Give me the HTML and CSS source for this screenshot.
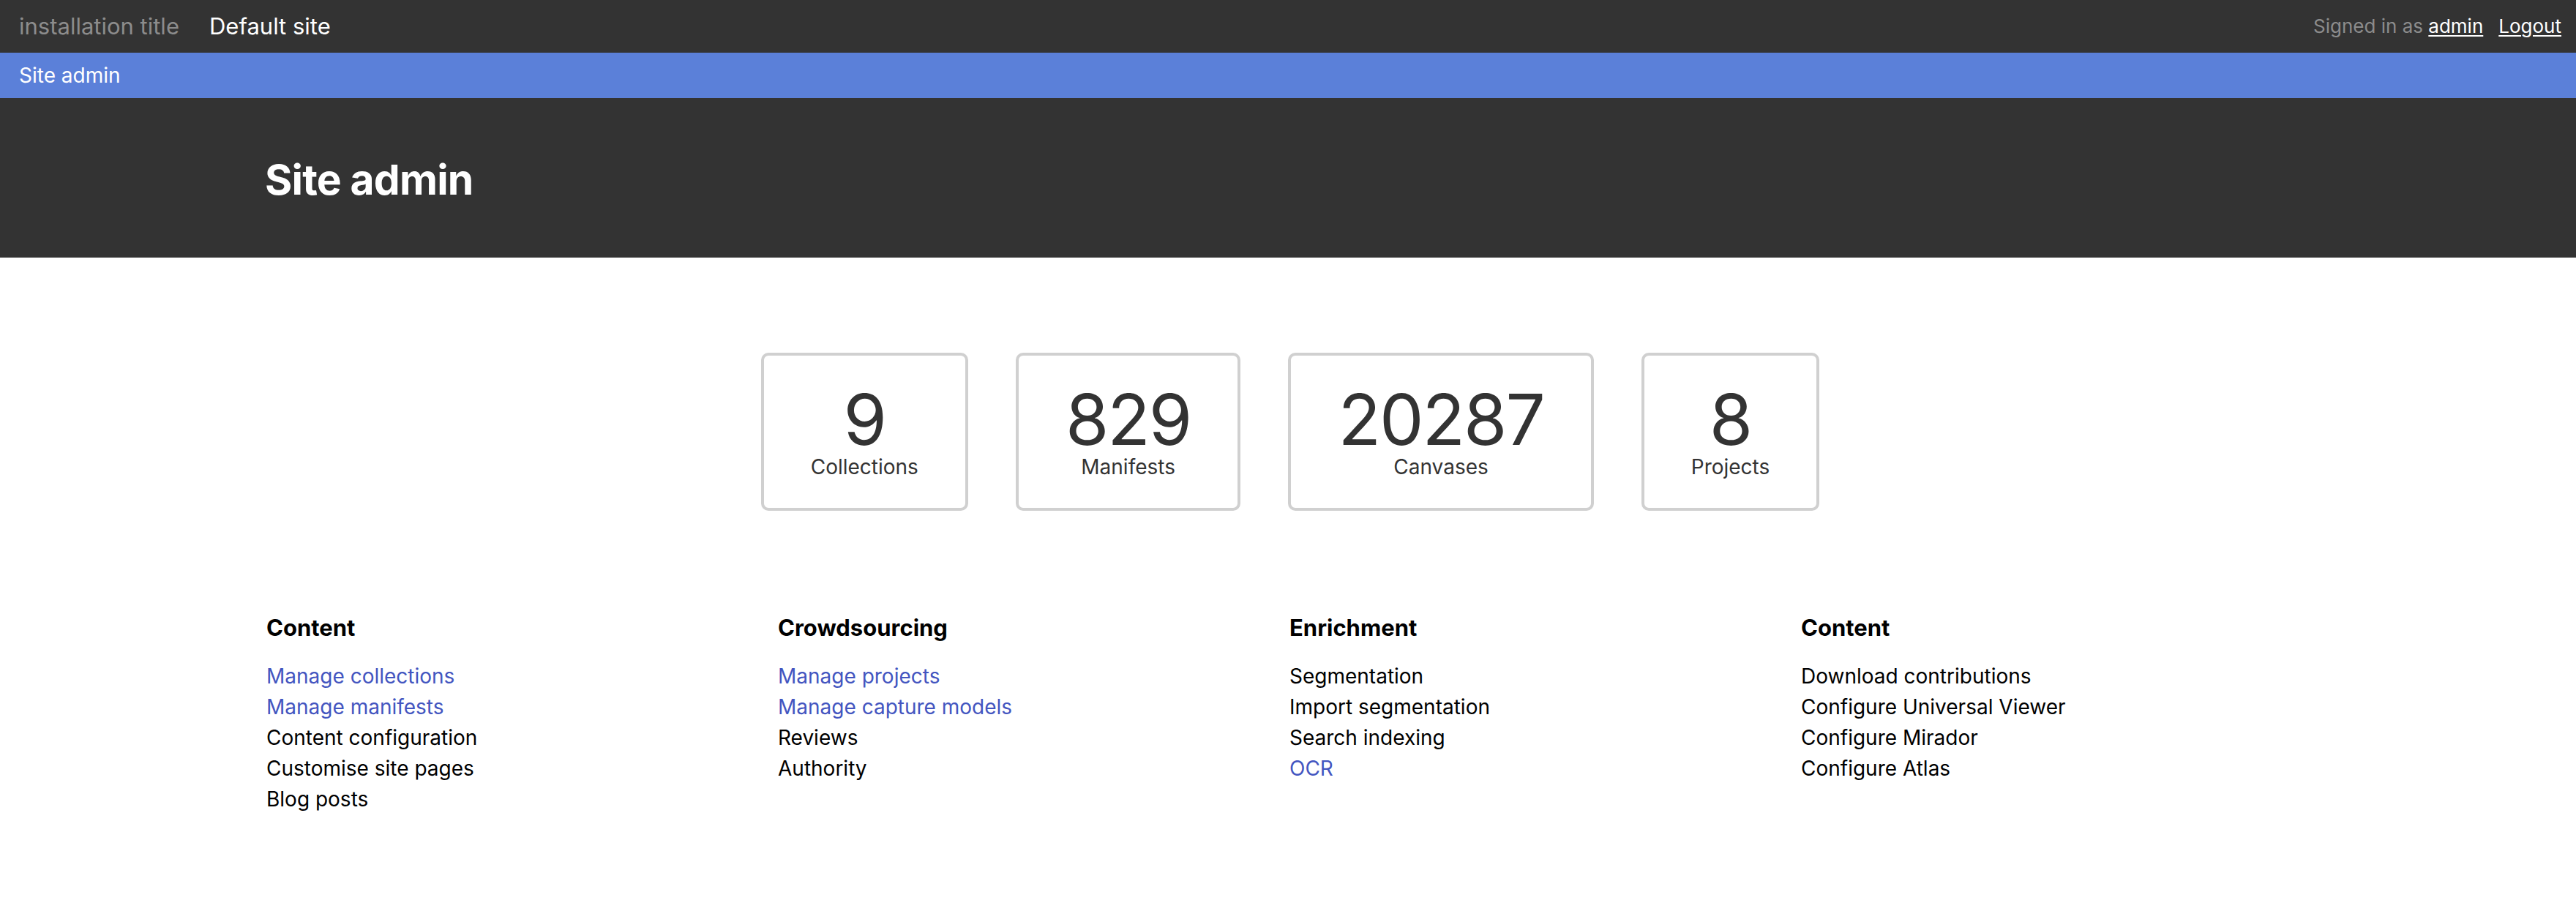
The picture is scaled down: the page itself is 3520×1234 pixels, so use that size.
FILE: index.html
```html
<!DOCTYPE html>
<html lang="en">
<head>
<meta charset="utf-8">
<title>Site admin</title>
<link rel="stylesheet" href="styles.css">
</head>
<body>
<header class="topbar">
  <div class="topbar-left">
    <span class="install-title">installation title</span>
    <a class="site-name" href="#">Default site</a>
  </div>
  <div class="topbar-right">
    <span class="signed">Signed in as <a class="user-link" href="#">admin</a></span>
    <a class="user-link logout" href="#">Logout</a>
  </div>
</header>
<nav class="subnav">
  <a class="subnav-link" href="#">Site admin</a>
</nav>
<section class="hero">
  <div class="container">
    <h1 class="hero-title">Site admin</h1>
  </div>
</section>
<section class="stats">
  <div class="stat">
    <div class="stat-num">9</div>
    <div class="stat-label">Collections</div>
  </div>
  <div class="stat">
    <div class="stat-num">829</div>
    <div class="stat-label">Manifests</div>
  </div>
  <div class="stat">
    <div class="stat-num">20287</div>
    <div class="stat-label">Canvases</div>
  </div>
  <div class="stat">
    <div class="stat-num">8</div>
    <div class="stat-label">Projects</div>
  </div>
</section>
<section class="container menus">
  <div class="menu">
    <h3 class="menu-title">Content</h3>
    <ul class="menu-list">
      <li><a class="menu-link" href="#">Manage collections</a></li>
      <li><a class="menu-link" href="#">Manage manifests</a></li>
      <li>Content configuration</li>
      <li>Customise site pages</li>
      <li>Blog posts</li>
    </ul>
  </div>
  <div class="menu">
    <h3 class="menu-title">Crowdsourcing</h3>
    <ul class="menu-list">
      <li><a class="menu-link" href="#">Manage projects</a></li>
      <li><a class="menu-link" href="#">Manage capture models</a></li>
      <li>Reviews</li>
      <li>Authority</li>
    </ul>
  </div>
  <div class="menu">
    <h3 class="menu-title">Enrichment</h3>
    <ul class="menu-list">
      <li>Segmentation</li>
      <li>Import segmentation</li>
      <li>Search indexing</li>
      <li><a class="menu-link" href="#">OCR</a></li>
    </ul>
  </div>
  <div class="menu">
    <h3 class="menu-title">Content</h3>
    <ul class="menu-list">
      <li>Download contributions</li>
      <li>Configure Universal Viewer</li>
      <li>Configure Mirador</li>
      <li>Configure Atlas</li>
    </ul>
  </div>
</section>
</body>
</html>
```

FILE: styles.css
```css
* { box-sizing: border-box; }

body {
  margin: 0;
  font-family: Inter, "Noto Sans", "Liberation Sans", sans-serif;
  font-size: 28px;
  line-height: 42px;
  color: #000;
  background: #fff;
}

a { text-decoration: none; }

.topbar {
  height: 72px;
  background: #333;
  display: flex;
  align-items: center;
  justify-content: space-between;
  padding: 0 20px 0 26px;
}

.topbar-left {
  display: flex;
  align-items: center;
  gap: 41px;
  font-size: 31px;
}

.install-title { color: #8c8c8c; }

.site-name { color: #fff; }

.topbar-right {
  display: flex;
  align-items: center;
  gap: 21px;
  font-size: 26px;
}

.signed { color: #8c8c8c; }

.user-link {
  color: #fff;
  text-decoration: underline;
  text-decoration-thickness: 2px;
  text-underline-offset: 3px;
}

.subnav {
  height: 62px;
  background: #5b80d9;
  display: flex;
  align-items: center;
  padding: 0 26px;
}

.subnav-link { color: #fff; }

.container {
  width: 2800px;
  margin: 0 auto;
}

.hero {
  height: 218px;
  background: #333;
  padding-top: 77px;
}

.hero-title {
  margin: 0;
  color: #fff;
  font-size: 57px;
  line-height: 70px;
  font-weight: 700;
  letter-spacing: -0.8px;
  padding-left: 2px;
}

.stats {
  display: flex;
  justify-content: center;
  gap: 65px;
  margin-top: 130px;
  padding-left: 6px;
}

.stat {
  border: 4px solid #d0d0d0;
  border-radius: 10px;
  padding: 39px 64px;
  text-align: center;
  color: #333;
}

.stat-num {
  font-size: 96px;
  line-height: 96px;
  letter-spacing: -2px;
}

.stat-label {
  font-size: 28px;
  line-height: 34px;
}

.menus {
  display: grid;
  grid-template-columns: repeat(4, 1fr);
  margin-top: 142px;
  padding-left: 4px;
}

.menu-title {
  margin: 0 0 27px;
  font-size: 31px;
  line-height: 36px;
  font-weight: 700;
}

.menu-list {
  list-style: none;
  margin: 0;
  padding: 0;
}

.menu-link { color: #4355c0; }
```
